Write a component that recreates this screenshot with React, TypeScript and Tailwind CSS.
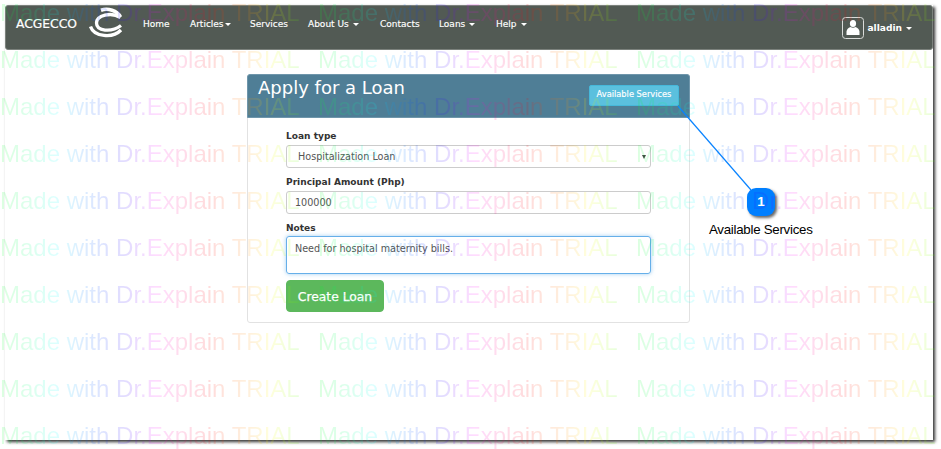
import type { ReactNode } from "react";

const navItems = [
  { label: "Home", caret: false, box: "w-[47px]" },
  { label: "Articles", caret: true, box: "w-[60px]", gap: "ml-[1px]" },
  { label: "Services", caret: false, box: "w-[58px]" },
  { label: "About Us", caret: true, box: "w-[72px]", gap: "ml-[4px]" },
  { label: "Contacts", caret: false, box: "w-[59px]" },
  { label: "Loans", caret: true, box: "w-[57px]", gap: "ml-[4px]" },
  { label: "Help", caret: true, box: "w-[40px]", gap: "ml-[4px]" },
];

function Caret({ className = "" }: { className?: string }) {
  return (
    <span
      className={`inline-block h-0 w-0 border-x-[3px] border-t-[3px] border-x-transparent border-t-white align-middle ${className}`}
    />
  );
}

function Logo() {
  return (
    <svg className="mt-px ml-[11px] h-[32px] w-[34px] shrink-0" viewBox="0 0 34 32" fill="none" stroke="#fff">
      <path d="M12 3.200C19 .8 28 3.500 31.500 10" strokeWidth="3.600" />
      <path d="M31.500 10.500C22 4.500 7.500 8.500 7.500 16C7.500 24 22 26 32 18.500" strokeWidth="3.300" />
      <path d="M1.500 19.500C5 30 24 31.500 32 23" strokeWidth="3.300" />
    </svg>
  );
}

function Navbar() {
  return (
    <nav className="flex h-[45px] rounded-[3px] border border-[#7b817c] bg-[#525a54] text-white">
      <div className="mt-[10px] ml-[10px] w-[62px] text-[12.3px] leading-[17px] whitespace-nowrap [-webkit-text-stroke:0.2px_white]">
        ACGECCO
      </div>
      <Logo />
      <div className="mt-[11px] ml-[20px] flex text-[9px] leading-[14px] [-webkit-text-stroke:0.15px_white]">
        {navItems.map((item) => (
          <div key={item.label} className={`${item.box} whitespace-nowrap`}>
            {item.label}
            {item.caret && <Caret className={item.gap} />}
          </div>
        ))}
      </div>
      <div className="mt-[11px] mr-[20px] ml-auto flex items-center self-start">
        <svg className="h-[22px] w-[22px]" viewBox="0 0 22 22">
          <rect x=".5" y=".5" width="21" height="21" rx="3" fill="none" stroke="#d9dbd9" />
          <ellipse cx="11" cy="6.500" rx="3.100" ry="3.500" fill="#fff" />
          <path d="M4.500 18v-3.500q.5-3.500 4-4.500 2.500 1.500 5 0 3.500 1 4 4.500V18z" fill="#fff" />
        </svg>
        <span className="ml-[3px] text-[9.1px] leading-[14px] font-bold">alladin</span>
        <Caret className="ml-[4px]" />
      </div>
    </nav>
  );
}

function Label({ children }: { children: ReactNode }) {
  return <label className="block h-[14px] text-[9.05px] leading-[16px] font-bold text-[#333]">{children}</label>;
}

function LoanPanel() {
  return (
    <section className="mt-[24px] ml-[242px] h-[249px] w-[443px] rounded-[3px] border border-[#e2e2e2] bg-white">
      <header className="-mx-px -mt-px flex h-[44px] justify-between rounded-t-[3px] border border-[#6f96ab] bg-[#4f7e96] pr-[10px] pl-[10px] text-white">
        <h1 className="text-[18px] leading-[26px] whitespace-nowrap">Apply for a Loan</h1>
        <button className="mt-[10px] h-[21px] w-[90px] rounded-[2px] border border-[#46b8da] bg-[#5bc0de] pb-[2px] text-[8.25px] leading-[17px] whitespace-nowrap [-webkit-text-stroke:0.15px_white]">
          Available Services
        </button>
      </header>
      <form className="mt-[10px] ml-[38px] w-[365px] text-[9.65px] text-[#555]">
        <Label>Loan type</Label>
        <div className="mt-[3px] flex h-[23px] items-center justify-between rounded-[3px] border border-[#ccc] pr-[4px] pl-[11px]">
          <span className="pt-[2px]">Hospitalization Loan</span>
          <span className="h-0 w-0 border-x-[2.5px] border-t-[4px] border-x-transparent border-t-[#444]" />
        </div>
        <div className="mt-[6px]">
          <Label>Principal Amount (Php)</Label>
        </div>
        <div className="mt-[3px] flex h-[23px] items-center rounded-[3px] border border-[#ccc] pt-[2px] pl-[8px]">100000</div>
        <div className="mt-[6px]">
          <Label>Notes</Label>
        </div>
        <div className="mt-[2px] h-[38px] rounded-[3px] border border-[#66afe9] pt-[4px] pl-[8px] leading-[15px] shadow-[0_0_4px_rgba(102,175,233,0.6)]">
          Need for hospital maternity bills.
        </div>
        <button className="mt-[6px] block h-[32px] w-[98px] rounded-[4px] border border-[#5cb85c] bg-[#5cb85c] pt-px text-[12.3px] leading-[30px] whitespace-nowrap text-white [-webkit-text-stroke:0.25px_white]">
          Create Loan
        </button>
      </form>
    </section>
  );
}

function Callout() {
  return (
    <>
      <svg className="absolute top-0 left-0 h-[449px] w-[941px]" viewBox="0 0 941 449">
        <path d="M678 106L751 190" stroke="#0a84ff" strokeWidth="1.200" />
      </svg>
      <div className="absolute top-[188px] left-[747px] flex h-[28px] w-[28px] items-center justify-center rounded-[9px] bg-[#007fff] font-['Liberation_Sans',sans-serif] text-[13.5px] font-bold text-white shadow-[2px_2px_3px_rgba(0,0,0,0.6)]">
        1
      </div>
      <div className="absolute top-[221px] left-[709px] font-['Liberation_Sans',sans-serif] text-[13.3px] leading-[17px] tracking-[-0.27px] whitespace-nowrap text-black">
        Available Services
      </div>
    </>
  );
}

function Watermark() {
  return (
    <div className="pointer-events-none absolute top-[-1px] left-0 grid h-[450px] w-[941px] auto-rows-[47px] grid-cols-[318px_318px_304px] overflow-hidden font-['Liberation_Sans',sans-serif] text-[24px] leading-[28px] whitespace-nowrap opacity-[0.135]">
      {Array.from({ length: 30 }, (_, i) => (
        <div key={i}>
          <span className="inline-block w-[300px] bg-[linear-gradient(90deg,#00ff20_0%,#00ff80_10%,#00ffff_19%,#0090ff_26%,#0040ff_33%,#3000ff_42%,#9000ff_47%,#ff00ff_52%,#ff0080_60%,#ff0000_70%,#ff6000_77%,#ffa000_84%,#ffff00_90%,#a0ff00_96%,#50ff00_100%)] bg-clip-text text-transparent">
            Made with Dr.Explain TRIAL
          </span>
        </div>
      ))}
    </div>
  );
}

export default function App() {
  return (
    <div className="relative h-[449px] w-[941px] overflow-hidden bg-white pt-[5px] pl-[5px] font-['DejaVu_Sans',Verdana,sans-serif]">
      <main className="h-[435px] w-[928px] bg-white shadow-[2px_2px_3px_rgba(0,0,0,0.8)]">
        <Navbar />
        <LoanPanel />
      </main>
      <Callout />
      <Watermark />
    </div>
  );
}
